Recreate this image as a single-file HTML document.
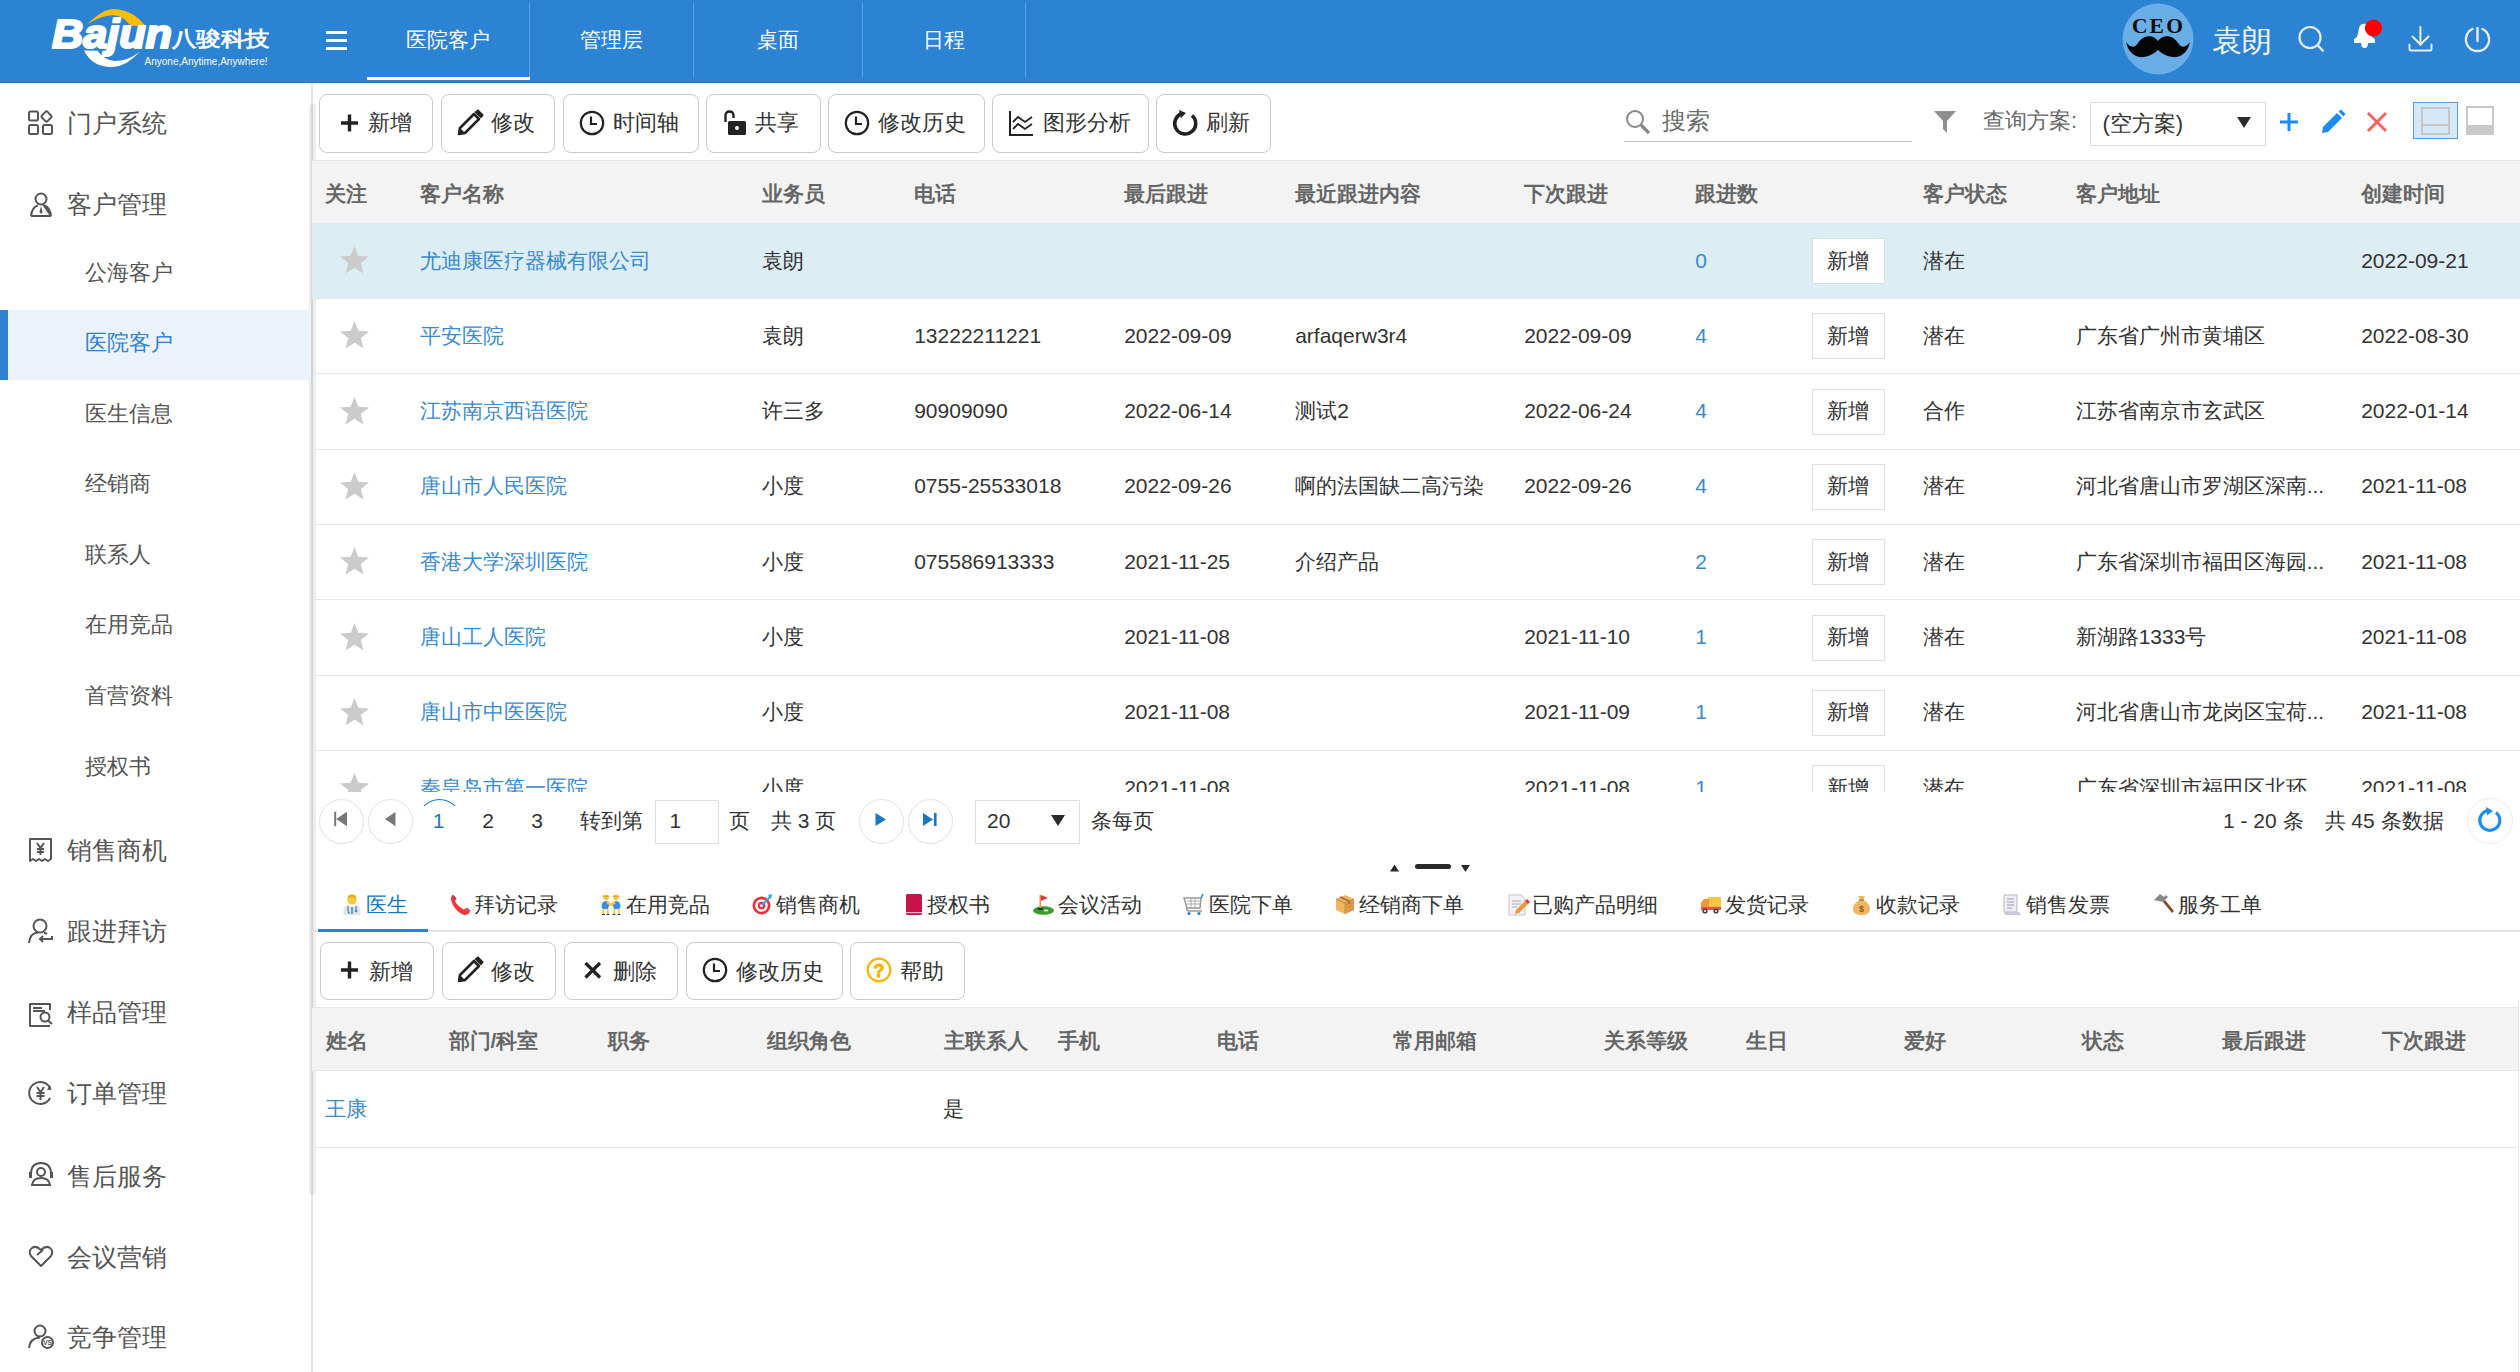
<!DOCTYPE html>
<html><head><meta charset="utf-8">
<style>
*{box-sizing:border-box;margin:0;padding:0}
html,body{width:2520px;height:1372px;overflow:hidden;background:#fff;font-family:"Liberation Sans",sans-serif;color:#333}
.t{position:absolute;white-space:nowrap;height:40px;line-height:40px}
.r{position:absolute}
svg.r{overflow:visible}
</style></head><body>

<div class="r" style="left:0px;top:0px;width:2520px;height:83px;background:#2c82d3"></div>
<div class="r" style="left:0px;top:82px;width:2520px;height:1px;background:#1c76cc"></div>
<svg class="r" style="left:0px;top:0px" width="300" height="83" viewBox="0 0 300 83">
<path d="M87.8 24 Q104 7 117 9.2 Q134 11 145 25.6 L131 26 Q122 14 111.7 15.3 Q101 16 87.8 24 Z" fill="#f7bd08"/>
<text x="52" y="48.3" font-family="Liberation Sans" font-weight="bold" font-style="italic" font-size="40" fill="#fff" stroke="#fff" stroke-width="2.2" stroke-linejoin="round" textLength="120" lengthAdjust="spacingAndGlyphs">Bajun</text>
<path d="M84 50.6 L97.5 50.8 Q104 60 114.4 61.1 Q128 61 140 51.4 Q126 67 111.7 67.2 Q92 67 84 50.6 Z" fill="#fff"/>
<text x="171.5" y="46.3" font-family="Liberation Sans" font-weight="bold" font-size="21" fill="#fff" textLength="98" lengthAdjust="spacingAndGlyphs">八骏科技</text>
<text x="144.5" y="64.5" font-family="Liberation Sans" font-size="10.5" fill="#fff" textLength="123" lengthAdjust="spacingAndGlyphs">Anyone,Anytime,Anywhere!</text>
</svg>
<div class="r" style="left:326px;top:31px;width:21px;height:2.6px;background:#fff"></div>
<div class="r" style="left:326px;top:39.2px;width:21px;height:2.6px;background:#fff"></div>
<div class="r" style="left:326px;top:47.3px;width:21px;height:2.6px;background:#fff"></div>
<div class="t" style="left:368.0px;width:160px;text-align:center;top:19.5px;font-size:21px;color:#fff;font-weight:normal">医院客户</div>
<div class="t" style="left:531.5px;width:160px;text-align:center;top:19.5px;font-size:21px;color:#fff;font-weight:normal">管理层</div>
<div class="t" style="left:697.5px;width:160px;text-align:center;top:19.5px;font-size:21px;color:#fff;font-weight:normal">桌面</div>
<div class="t" style="left:863.5px;width:160px;text-align:center;top:19.5px;font-size:21px;color:#fff;font-weight:normal">日程</div>
<div class="r" style="left:529px;top:3px;width:1px;height:74px;background:rgba(255,255,255,0.25)"></div>
<div class="r" style="left:693px;top:3px;width:1px;height:74px;background:rgba(255,255,255,0.25)"></div>
<div class="r" style="left:862px;top:3px;width:1px;height:74px;background:rgba(255,255,255,0.25)"></div>
<div class="r" style="left:1025px;top:3px;width:1px;height:74px;background:rgba(255,255,255,0.25)"></div>
<div class="r" style="left:367px;top:77px;width:163px;height:3px;background:#fff"></div>
<svg class="r" style="left:2122px;top:3px" width="72" height="72" viewBox="0 0 72 72">
<circle cx="36" cy="36" r="35.5" fill="#6aaee8"/>
<text x="36.5" y="29.5" text-anchor="middle" font-family="Liberation Serif" font-weight="bold" font-size="21.5" fill="#0a0a0a" letter-spacing="2.2">CEO</text>
<path d="M36 38 C40 32 50 31 56 40 C59 45 64 45 68 39 C66 50 58 55 50 54 C44 53 39 50 36 47 C33 50 28 53 22 54 C14 55 6 50 4 39 C8 45 13 45 16 40 C22 31 32 32 36 38 Z" fill="#050505"/>
</svg>
<div class="t" style="left:2212px;top:20.5px;font-size:30px;color:#eef4fa;font-weight:normal;">袁朗</div>
<svg class="r" style="left:0px;top:0px" width="1" height="1" viewBox="0 0 1 1">
<circle cx="2310" cy="37.5" r="10.5" fill="none" stroke="#e6eef6" stroke-width="2.2"/><line x1="2317.5" y1="45" x2="2323.5" y2="51.5" stroke="#e6eef6" stroke-width="2.4"/>
<path d="M2354 43 V38.9 Q2357 38 2358 34 L2359 28 Q2360 23.7 2364.5 23.7 Q2369 23.7 2370 28 L2371 34 Q2372 38 2375 38.9 V43 Z" fill="#fff"/>
<path d="M2361 43 H2368 Q2368 48 2364.5 48 Q2361 48 2361 43 Z" fill="#fff"/>
<circle cx="2373.5" cy="28" r="8.6" fill="#ff0000"/>
<path d="M2420.4 27 V45 M2412.5 36.5 L2420.4 44.5 L2428.5 36.5" fill="none" stroke="#e6eef6" stroke-width="2" stroke-linecap="round"/>
<path d="M2409.5 44.5 V49 Q2409.5 50.5 2411 50.5 H2430 Q2431.5 50.5 2431.5 49 V44.5" fill="none" stroke="#e6eef6" stroke-width="2" stroke-linecap="round"/>
<path d="M2472.5 29 A11.6 11.6 0 1 0 2482.5 29" fill="none" stroke="#e6eef6" stroke-width="2.4" stroke-linecap="round"/>
<line x1="2477.5" y1="28" x2="2477.5" y2="41" stroke="#e6eef6" stroke-width="2.4" stroke-linecap="round"/>
</svg>
<div class="r" style="left:311px;top:83px;width:2px;height:1289px;background:#e4e4e4"></div>
<div class="r" style="left:309px;top:104px;width:7px;height:1091px;background:rgba(0,0,0,0.07);border-radius:4px"></div>
<div class="r" style="left:0px;top:310px;width:311px;height:70px;background:#ebf2fa"></div>
<div class="r" style="left:0px;top:310px;width:8px;height:70px;background:#2c82d3"></div>
<div class="t" style="left:67px;top:103px;font-size:25px;color:#555;font-weight:normal;">门户系统</div>
<div class="t" style="left:67px;top:184px;font-size:25px;color:#555;font-weight:normal;">客户管理</div>
<div class="t" style="left:67px;top:830px;font-size:25px;color:#555;font-weight:normal;">销售商机</div>
<div class="t" style="left:67px;top:911px;font-size:25px;color:#555;font-weight:normal;">跟进拜访</div>
<div class="t" style="left:67px;top:992px;font-size:25px;color:#555;font-weight:normal;">样品管理</div>
<div class="t" style="left:67px;top:1073px;font-size:25px;color:#555;font-weight:normal;">订单管理</div>
<div class="t" style="left:67px;top:1155.5px;font-size:25px;color:#555;font-weight:normal;">售后服务</div>
<div class="t" style="left:67px;top:1236.5px;font-size:25px;color:#555;font-weight:normal;">会议营销</div>
<div class="t" style="left:67px;top:1317px;font-size:25px;color:#555;font-weight:normal;">竞争管理</div>
<div class="t" style="left:84.5px;top:252.5px;font-size:22px;color:#555;font-weight:normal;">公海客户</div>
<div class="t" style="left:84.5px;top:323px;font-size:22px;color:#2c82d3;font-weight:normal;">医院客户</div>
<div class="t" style="left:84.5px;top:393.5px;font-size:22px;color:#555;font-weight:normal;">医生信息</div>
<div class="t" style="left:84.5px;top:464px;font-size:22px;color:#555;font-weight:normal;">经销商</div>
<div class="t" style="left:84.5px;top:534.5px;font-size:22px;color:#555;font-weight:normal;">联系人</div>
<div class="t" style="left:84.5px;top:605px;font-size:22px;color:#555;font-weight:normal;">在用竞品</div>
<div class="t" style="left:84.5px;top:676px;font-size:22px;color:#555;font-weight:normal;">首营资料</div>
<div class="t" style="left:84.5px;top:746.5px;font-size:22px;color:#555;font-weight:normal;">授权书</div>
<svg class="r" style="left:28px;top:110px" width="26" height="26" viewBox="0 0 26 26"><rect x="1" y="9.5" width="9" height="9" rx="1.5" fill="none" stroke="#555" stroke-width="2" transform="translate(0,-8)"/><rect x="1" y="15" width="9" height="9" rx="1.5" fill="none" stroke="#555" stroke-width="2"/><rect x="15" y="15" width="9" height="9" rx="1.5" fill="none" stroke="#555" stroke-width="2"/><rect x="14.5" y="2.5" width="8" height="8" rx="1.5" fill="none" stroke="#555" stroke-width="2" transform="rotate(45 18.5 6.5)"/></svg>
<svg class="r" style="left:28px;top:192px" width="26" height="26" viewBox="0 0 26 26"><circle cx="13" cy="7" r="5.5" fill="none" stroke="#555" stroke-width="2"/><path d="M3 24 Q4 15 10 13.5 M16 13.5 Q22 15 23 24 Z M3 24 H23" fill="none" stroke="#555" stroke-width="2"/><path d="M13 14 L11.5 20 L13 22 L14.5 20 Z" fill="#555"/></svg>
<svg class="r" style="left:28px;top:837px" width="26" height="26" viewBox="0 0 26 26"><path d="M2 2 H23 V22 L20 24 L17 22 L14 24 L11 22 L8 24 L5 22 L2 24 Z" fill="none" stroke="#555" stroke-width="2" stroke-linejoin="round"/><path d="M9 6 L12.5 11 L16 6 M12.5 11 V18 M9 12 H16 M9 15 H16" fill="none" stroke="#555" stroke-width="2" stroke-width="1.6"/></svg>
<svg class="r" style="left:28px;top:918px" width="26" height="26" viewBox="0 0 26 26"><circle cx="12" cy="8" r="6.5" fill="none" stroke="#555" stroke-width="2"/><path d="M1 25 Q2 15 10 14.5 M16 15 Q18 15 19 16" fill="none" stroke="#555" stroke-width="2"/><path d="M24 18 V21 H12 M15 18 L12 21 L15 24" fill="none" stroke="#555" stroke-width="2"/></svg>
<svg class="r" style="left:28px;top:1002px" width="26" height="26" viewBox="0 0 26 26"><path d="M22 8 V2 H2 V24 H22" fill="none" stroke="#555" stroke-width="2" stroke-linejoin="round"/><path d="M5 6 H14 M5 9 H17" fill="none" stroke="#555" stroke-width="2"/><circle cx="17" cy="15" r="4.5" fill="none" stroke="#555" stroke-width="2"/><path d="M20 18.5 L24 22" fill="none" stroke="#555" stroke-width="2"/></svg>
<svg class="r" style="left:28px;top:1080px" width="26" height="26" viewBox="0 0 26 26"><path d="M22 8 A11 11 0 1 0 22 18" fill="none" stroke="#555" stroke-width="2"/><path d="M22 5 L23.5 10 L19 10 Z" fill="#555"/><path d="M9 7 L12.5 12 L16 7 M12.5 12 V20 M8.5 13 H16.5 M8.5 16 H16.5" fill="none" stroke="#555" stroke-width="2" stroke-width="1.6"/></svg>
<svg class="r" style="left:28px;top:1161px" width="26" height="26" viewBox="0 0 26 26"><path d="M3 13 Q3 2 13 2 Q23 2 23 13" fill="none" stroke="#555" stroke-width="2"/><rect x="1" y="11" width="3" height="6" fill="#555"/><rect x="22" y="11" width="3" height="6" fill="#555"/><circle cx="13" cy="11" r="4" fill="none" stroke="#555" stroke-width="2"/><path d="M4 24 Q5 17 13 17 Q21 17 22 24 Z" fill="none" stroke="#555" stroke-width="2"/></svg>
<svg class="r" style="left:28px;top:1245px" width="26" height="26" viewBox="0 0 26 26"><path d="M13 21 L3 11 Q0 6 4 3 Q8 0 13 5 Q18 0 22 3 Q26 6 23 11 Z" fill="none" stroke="#555" stroke-width="2" stroke-linejoin="round"/><path d="M9 10 L15 5" fill="none" stroke="#555" stroke-width="2"/></svg>
<svg class="r" style="left:28px;top:1324px" width="26" height="26" viewBox="0 0 26 26"><circle cx="12" cy="7" r="5.5" fill="none" stroke="#555" stroke-width="2"/><path d="M1 24 Q2 14 12 13.5" fill="none" stroke="#555" stroke-width="2"/><circle cx="19.5" cy="18.5" r="5.5" fill="none" stroke="#555" stroke-width="2"/><text x="19.5" y="21" text-anchor="middle" font-size="6.5" font-weight="bold" fill="#555" font-family="Liberation Sans">VS</text></svg>
<div class="r" style="left:319px;top:94px;width:114px;height:59px;border:1px solid #c9c9c9;border-radius:8px;background:#fff"></div>
<svg class="r" style="left:337px;top:109.5px" width="26" height="26" viewBox="0 0 26 26"><path d="M4 13 H21 M12.5 4.5 V21.5" stroke="#222" stroke-width="3.4"/></svg>
<div class="t" style="left:368px;top:102.7px;font-size:22px;color:#333;font-weight:normal;">新增</div>
<div class="r" style="left:441px;top:94px;width:114px;height:59px;border:1px solid #c9c9c9;border-radius:8px;background:#fff"></div>
<svg class="r" style="left:457px;top:109.5px" width="26" height="26" viewBox="0 0 26 26"><path d="M2 24 L3 18 L17 4 L22 9 L8 23 Z" fill="none" stroke="#222" stroke-width="2.6" stroke-linejoin="round"/><path d="M19 2 L21 0.5 L25.5 5 L24 7 Z" fill="#222" stroke="#222" stroke-width="2"/><path d="M2 24 L3 18 L8 23 Z" fill="#222"/></svg>
<div class="t" style="left:490.5px;top:102.7px;font-size:22px;color:#333;font-weight:normal;">修改</div>
<div class="r" style="left:563px;top:94px;width:136px;height:59px;border:1px solid #c9c9c9;border-radius:8px;background:#fff"></div>
<svg class="r" style="left:579px;top:109.5px" width="26" height="26" viewBox="0 0 26 26"><circle cx="13" cy="13" r="11.2" fill="none" stroke="#222" stroke-width="2.2"/><path d="M12 6.5 V14 H18" fill="none" stroke="#222" stroke-width="2.2"/></svg>
<div class="t" style="left:612.5px;top:102.7px;font-size:22px;color:#333;font-weight:normal;">时间轴</div>
<div class="r" style="left:706px;top:94px;width:115px;height:59px;border:1px solid #c9c9c9;border-radius:8px;background:#fff"></div>
<svg class="r" style="left:722px;top:109.5px" width="26" height="26" viewBox="0 0 26 26"><path d="M3.5 12 V5.5 Q3.5 1.5 7.5 1.5 Q11.5 1.5 11.5 5.5 V8" fill="none" stroke="#222" stroke-width="2.4"/><rect x="6" y="11" width="18" height="14" rx="1.5" fill="#222"/><circle cx="15" cy="18" r="2" fill="#fff"/></svg>
<div class="t" style="left:755px;top:102.7px;font-size:22px;color:#333;font-weight:normal;">共享</div>
<div class="r" style="left:828px;top:94px;width:157px;height:59px;border:1px solid #c9c9c9;border-radius:8px;background:#fff"></div>
<svg class="r" style="left:844px;top:109.5px" width="26" height="26" viewBox="0 0 26 26"><circle cx="13" cy="13" r="11.2" fill="none" stroke="#222" stroke-width="2.2"/><path d="M12 6.5 V14 H18" fill="none" stroke="#222" stroke-width="2.2"/></svg>
<div class="t" style="left:877.5px;top:102.7px;font-size:22px;color:#333;font-weight:normal;">修改历史</div>
<div class="r" style="left:992px;top:94px;width:157px;height:59px;border:1px solid #c9c9c9;border-radius:8px;background:#fff"></div>
<svg class="r" style="left:1008px;top:109.5px" width="26" height="26" viewBox="0 0 26 26"><path d="M2 1 V25 H25" fill="none" stroke="#222" stroke-width="2"/><path d="M5 12 L10 7 L17 12 L24 7 M5 19 L10 14 L17 19 L24 14" fill="none" stroke="#222" stroke-width="1.8"/></svg>
<div class="t" style="left:1042.5px;top:102.7px;font-size:22px;color:#333;font-weight:normal;">图形分析</div>
<div class="r" style="left:1156px;top:94px;width:115px;height:59px;border:1px solid #c9c9c9;border-radius:8px;background:#fff"></div>
<svg class="r" style="left:1172px;top:109.5px" width="26" height="26" viewBox="0 0 26 26"><path d="M10 3.5 A10.5 10.5 0 1 0 20 5.5" fill="none" stroke="#222" stroke-width="3.6"/><path d="M7 0 L14 3 L9 8 Z" fill="#222"/></svg>
<div class="t" style="left:1206px;top:102.7px;font-size:22px;color:#333;font-weight:normal;">刷新</div>
<svg class="r" style="left:1624px;top:108px" width="28" height="28" viewBox="0 0 28 28"><circle cx="11" cy="11" r="8" fill="none" stroke="#888" stroke-width="2"/><path d="M17 17 L25 25" stroke="#888" stroke-width="3.2"/></svg>
<div class="t" style="left:1661.5px;top:101px;font-size:24px;color:#6b6b6b;font-weight:normal;">搜索</div>
<div class="r" style="left:1624px;top:140.7px;width:288px;height:1.2px;background:#c4c4c4"></div>
<svg class="r" style="left:1933px;top:110px" width="24" height="24" viewBox="0 0 24 24"><path d="M1 1 H23 L14 11 V23 L10 19 V11 Z" fill="#8e8e8e"/></svg>
<div class="t" style="left:1983px;top:101px;font-size:22px;color:#666;font-weight:normal;">查询方案:</div>
<div class="r" style="left:2090px;top:102px;width:176px;height:44px;border:1px solid #dcdcdc;background:#fff"></div>
<div class="t" style="left:2102.5px;top:104px;font-size:22px;color:#333;font-weight:normal;">(空方案)</div>
<svg class="r" style="left:2237px;top:117px" width="14" height="11" viewBox="0 0 14 11"><path d="M0 0 H14 L7 11 Z" fill="#2b2b2b"/></svg>
<svg class="r" style="left:2278px;top:112px" width="22" height="20" viewBox="0 0 22 20"><path d="M2 10 H20 M11 1 V19" stroke="#1a8cf2" stroke-width="3"/></svg>
<svg class="r" style="left:2320px;top:109px" width="26" height="26" viewBox="0 0 26 26"><path d="M2 24 L3 18 L17 4 L22 9 L8 23 Z" fill="#1a8cf2"/><path d="M18.5 2.5 L21 0.5 L25.5 5 L23.5 7.5 Z" fill="#1a8cf2"/><path d="M4.5 21.5 L17 9" stroke="#fff" stroke-width="0"/></svg>
<svg class="r" style="left:2366px;top:112px" width="22" height="20" viewBox="0 0 22 20"><path d="M2 1 L20 19 M20 1 L2 19" stroke="#f46262" stroke-width="3"/></svg>
<div class="r" style="left:2413px;top:102px;width:45px;height:37px;background:#d5e8f7;border:1px solid #5a9ad8"></div>
<div class="r" style="left:2421px;top:106.5px;width:29px;height:28px;border:2px solid #c6c6c6"></div>
<div class="r" style="left:2421px;top:123.5px;width:29px;height:2px;background:#c6c6c6"></div>
<div class="r" style="left:2466px;top:106px;width:28px;height:29px;border:2px solid #c9c9c9;background:#fff"></div>
<div class="r" style="left:2466px;top:124.5px;width:28px;height:10.5px;background:#c9c9c9"></div>
<div class="r" style="left:312px;top:160px;width:2208px;height:1px;background:#e6e6e6"></div>
<div class="r" style="left:312px;top:161px;width:2208px;height:62px;background:#f3f3f3"></div>
<div class="t" style="left:325.2px;top:173.5px;font-size:21px;color:#666;font-weight:bold;">关注</div>
<div class="t" style="left:420.2px;top:173.5px;font-size:21px;color:#666;font-weight:bold;">客户名称</div>
<div class="t" style="left:762.2px;top:173.5px;font-size:21px;color:#666;font-weight:bold;">业务员</div>
<div class="t" style="left:914.2px;top:173.5px;font-size:21px;color:#666;font-weight:bold;">电话</div>
<div class="t" style="left:1124.2px;top:173.5px;font-size:21px;color:#666;font-weight:bold;">最后跟进</div>
<div class="t" style="left:1295.2px;top:173.5px;font-size:21px;color:#666;font-weight:bold;">最近跟进内容</div>
<div class="t" style="left:1524.2px;top:173.5px;font-size:21px;color:#666;font-weight:bold;">下次跟进</div>
<div class="t" style="left:1695.2px;top:173.5px;font-size:21px;color:#666;font-weight:bold;">跟进数</div>
<div class="t" style="left:1923.2px;top:173.5px;font-size:21px;color:#666;font-weight:bold;">客户状态</div>
<div class="t" style="left:2075.7px;top:173.5px;font-size:21px;color:#666;font-weight:bold;">客户地址</div>
<div class="t" style="left:2361.2px;top:173.5px;font-size:21px;color:#666;font-weight:bold;">创建时间</div>
<div class="r" style="left:312px;top:223px;width:2208px;height:569px;overflow:hidden">
<div class="r" style="left:0;top:0;width:2208px;height:75px;background:#dcedf3"></div>
<div class="r" style="left:0;top:75.00px;width:2208px;height:1px;background:#e6e6e6"></div>
<svg class="r" style="left:27.5px;top:23.00px" width="30" height="30" viewBox="0 0 30 30"><path d="M14.5 0 L18.3 9.7 L29 10.4 L20.8 17.1 L23.5 27.6 L14.5 21.8 L5.5 27.6 L8.2 17.1 L0 10.4 L10.7 9.7 Z" fill="#cbcbcb"/></svg>
<div class="t" style="left:108.2px;top:17.50px;font-size:21px;color:#3a8ad0">尤迪康医疗器械有限公司</div>
<div class="t" style="left:450.2px;top:17.50px;font-size:21px;color:#333">袁朗</div>
<div class="t" style="left:602.2px;top:17.50px;font-size:21px;color:#333"></div>
<div class="t" style="left:812.2px;top:17.50px;font-size:21px;color:#333"></div>
<div class="t" style="left:983.2px;top:17.50px;font-size:21px;color:#333"></div>
<div class="t" style="left:1212.2px;top:17.50px;font-size:21px;color:#333"></div>
<div class="t" style="left:1383.2px;top:17.50px;font-size:21px;color:#3a8ad0">0</div>
<div class="r" style="left:1500px;top:15.00px;width:73px;height:46px;border:1px solid #dedede;background:#fff"></div>
<div class="t" style="left:1515.2px;top:17.50px;font-size:21px;color:#333">新增</div>
<div class="t" style="left:1611.2px;top:17.50px;font-size:21px;color:#333">潜在</div>
<div class="t" style="left:1763.7px;top:17.50px;font-size:21px;color:#333"></div>
<div class="t" style="left:2049.2px;top:17.50px;font-size:21px;color:#333">2022-09-21</div>
<div class="r" style="left:0;top:150.33px;width:2208px;height:1px;background:#e6e6e6"></div>
<svg class="r" style="left:27.5px;top:98.33px" width="30" height="30" viewBox="0 0 30 30"><path d="M14.5 0 L18.3 9.7 L29 10.4 L20.8 17.1 L23.5 27.6 L14.5 21.8 L5.5 27.6 L8.2 17.1 L0 10.4 L10.7 9.7 Z" fill="#cbcbcb"/></svg>
<div class="t" style="left:108.2px;top:92.83px;font-size:21px;color:#3a8ad0">平安医院</div>
<div class="t" style="left:450.2px;top:92.83px;font-size:21px;color:#333">袁朗</div>
<div class="t" style="left:602.2px;top:92.83px;font-size:21px;color:#333">13222211221</div>
<div class="t" style="left:812.2px;top:92.83px;font-size:21px;color:#333">2022-09-09</div>
<div class="t" style="left:983.2px;top:92.83px;font-size:21px;color:#333">arfaqerw3r4</div>
<div class="t" style="left:1212.2px;top:92.83px;font-size:21px;color:#333">2022-09-09</div>
<div class="t" style="left:1383.2px;top:92.83px;font-size:21px;color:#3a8ad0">4</div>
<div class="r" style="left:1500px;top:90.33px;width:73px;height:46px;border:1px solid #dedede;background:#fff"></div>
<div class="t" style="left:1515.2px;top:92.83px;font-size:21px;color:#333">新增</div>
<div class="t" style="left:1611.2px;top:92.83px;font-size:21px;color:#333">潜在</div>
<div class="t" style="left:1763.7px;top:92.83px;font-size:21px;color:#333">广东省广州市黄埔区</div>
<div class="t" style="left:2049.2px;top:92.83px;font-size:21px;color:#333">2022-08-30</div>
<div class="r" style="left:0;top:225.66px;width:2208px;height:1px;background:#e6e6e6"></div>
<svg class="r" style="left:27.5px;top:173.66px" width="30" height="30" viewBox="0 0 30 30"><path d="M14.5 0 L18.3 9.7 L29 10.4 L20.8 17.1 L23.5 27.6 L14.5 21.8 L5.5 27.6 L8.2 17.1 L0 10.4 L10.7 9.7 Z" fill="#cbcbcb"/></svg>
<div class="t" style="left:108.2px;top:168.16px;font-size:21px;color:#3a8ad0">江苏南京西语医院</div>
<div class="t" style="left:450.2px;top:168.16px;font-size:21px;color:#333">许三多</div>
<div class="t" style="left:602.2px;top:168.16px;font-size:21px;color:#333">90909090</div>
<div class="t" style="left:812.2px;top:168.16px;font-size:21px;color:#333">2022-06-14</div>
<div class="t" style="left:983.2px;top:168.16px;font-size:21px;color:#333">测试2</div>
<div class="t" style="left:1212.2px;top:168.16px;font-size:21px;color:#333">2022-06-24</div>
<div class="t" style="left:1383.2px;top:168.16px;font-size:21px;color:#3a8ad0">4</div>
<div class="r" style="left:1500px;top:165.66px;width:73px;height:46px;border:1px solid #dedede;background:#fff"></div>
<div class="t" style="left:1515.2px;top:168.16px;font-size:21px;color:#333">新增</div>
<div class="t" style="left:1611.2px;top:168.16px;font-size:21px;color:#333">合作</div>
<div class="t" style="left:1763.7px;top:168.16px;font-size:21px;color:#333">江苏省南京市玄武区</div>
<div class="t" style="left:2049.2px;top:168.16px;font-size:21px;color:#333">2022-01-14</div>
<div class="r" style="left:0;top:300.99px;width:2208px;height:1px;background:#e6e6e6"></div>
<svg class="r" style="left:27.5px;top:248.99px" width="30" height="30" viewBox="0 0 30 30"><path d="M14.5 0 L18.3 9.7 L29 10.4 L20.8 17.1 L23.5 27.6 L14.5 21.8 L5.5 27.6 L8.2 17.1 L0 10.4 L10.7 9.7 Z" fill="#cbcbcb"/></svg>
<div class="t" style="left:108.2px;top:243.49px;font-size:21px;color:#3a8ad0">唐山市人民医院</div>
<div class="t" style="left:450.2px;top:243.49px;font-size:21px;color:#333">小度</div>
<div class="t" style="left:602.2px;top:243.49px;font-size:21px;color:#333">0755-25533018</div>
<div class="t" style="left:812.2px;top:243.49px;font-size:21px;color:#333">2022-09-26</div>
<div class="t" style="left:983.2px;top:243.49px;font-size:21px;color:#333">啊的法国缺二高污染</div>
<div class="t" style="left:1212.2px;top:243.49px;font-size:21px;color:#333">2022-09-26</div>
<div class="t" style="left:1383.2px;top:243.49px;font-size:21px;color:#3a8ad0">4</div>
<div class="r" style="left:1500px;top:240.99px;width:73px;height:46px;border:1px solid #dedede;background:#fff"></div>
<div class="t" style="left:1515.2px;top:243.49px;font-size:21px;color:#333">新增</div>
<div class="t" style="left:1611.2px;top:243.49px;font-size:21px;color:#333">潜在</div>
<div class="t" style="left:1763.7px;top:243.49px;font-size:21px;color:#333">河北省唐山市罗湖区深南...</div>
<div class="t" style="left:2049.2px;top:243.49px;font-size:21px;color:#333">2021-11-08</div>
<div class="r" style="left:0;top:376.32px;width:2208px;height:1px;background:#e6e6e6"></div>
<svg class="r" style="left:27.5px;top:324.32px" width="30" height="30" viewBox="0 0 30 30"><path d="M14.5 0 L18.3 9.7 L29 10.4 L20.8 17.1 L23.5 27.6 L14.5 21.8 L5.5 27.6 L8.2 17.1 L0 10.4 L10.7 9.7 Z" fill="#cbcbcb"/></svg>
<div class="t" style="left:108.2px;top:318.82px;font-size:21px;color:#3a8ad0">香港大学深圳医院</div>
<div class="t" style="left:450.2px;top:318.82px;font-size:21px;color:#333">小度</div>
<div class="t" style="left:602.2px;top:318.82px;font-size:21px;color:#333">075586913333</div>
<div class="t" style="left:812.2px;top:318.82px;font-size:21px;color:#333">2021-11-25</div>
<div class="t" style="left:983.2px;top:318.82px;font-size:21px;color:#333">介绍产品</div>
<div class="t" style="left:1212.2px;top:318.82px;font-size:21px;color:#333"></div>
<div class="t" style="left:1383.2px;top:318.82px;font-size:21px;color:#3a8ad0">2</div>
<div class="r" style="left:1500px;top:316.32px;width:73px;height:46px;border:1px solid #dedede;background:#fff"></div>
<div class="t" style="left:1515.2px;top:318.82px;font-size:21px;color:#333">新增</div>
<div class="t" style="left:1611.2px;top:318.82px;font-size:21px;color:#333">潜在</div>
<div class="t" style="left:1763.7px;top:318.82px;font-size:21px;color:#333">广东省深圳市福田区海园...</div>
<div class="t" style="left:2049.2px;top:318.82px;font-size:21px;color:#333">2021-11-08</div>
<div class="r" style="left:0;top:451.65px;width:2208px;height:1px;background:#e6e6e6"></div>
<svg class="r" style="left:27.5px;top:399.65px" width="30" height="30" viewBox="0 0 30 30"><path d="M14.5 0 L18.3 9.7 L29 10.4 L20.8 17.1 L23.5 27.6 L14.5 21.8 L5.5 27.6 L8.2 17.1 L0 10.4 L10.7 9.7 Z" fill="#cbcbcb"/></svg>
<div class="t" style="left:108.2px;top:394.15px;font-size:21px;color:#3a8ad0">唐山工人医院</div>
<div class="t" style="left:450.2px;top:394.15px;font-size:21px;color:#333">小度</div>
<div class="t" style="left:602.2px;top:394.15px;font-size:21px;color:#333"></div>
<div class="t" style="left:812.2px;top:394.15px;font-size:21px;color:#333">2021-11-08</div>
<div class="t" style="left:983.2px;top:394.15px;font-size:21px;color:#333"></div>
<div class="t" style="left:1212.2px;top:394.15px;font-size:21px;color:#333">2021-11-10</div>
<div class="t" style="left:1383.2px;top:394.15px;font-size:21px;color:#3a8ad0">1</div>
<div class="r" style="left:1500px;top:391.65px;width:73px;height:46px;border:1px solid #dedede;background:#fff"></div>
<div class="t" style="left:1515.2px;top:394.15px;font-size:21px;color:#333">新增</div>
<div class="t" style="left:1611.2px;top:394.15px;font-size:21px;color:#333">潜在</div>
<div class="t" style="left:1763.7px;top:394.15px;font-size:21px;color:#333">新湖路1333号</div>
<div class="t" style="left:2049.2px;top:394.15px;font-size:21px;color:#333">2021-11-08</div>
<div class="r" style="left:0;top:526.98px;width:2208px;height:1px;background:#e6e6e6"></div>
<svg class="r" style="left:27.5px;top:474.98px" width="30" height="30" viewBox="0 0 30 30"><path d="M14.5 0 L18.3 9.7 L29 10.4 L20.8 17.1 L23.5 27.6 L14.5 21.8 L5.5 27.6 L8.2 17.1 L0 10.4 L10.7 9.7 Z" fill="#cbcbcb"/></svg>
<div class="t" style="left:108.2px;top:469.48px;font-size:21px;color:#3a8ad0">唐山市中医医院</div>
<div class="t" style="left:450.2px;top:469.48px;font-size:21px;color:#333">小度</div>
<div class="t" style="left:602.2px;top:469.48px;font-size:21px;color:#333"></div>
<div class="t" style="left:812.2px;top:469.48px;font-size:21px;color:#333">2021-11-08</div>
<div class="t" style="left:983.2px;top:469.48px;font-size:21px;color:#333"></div>
<div class="t" style="left:1212.2px;top:469.48px;font-size:21px;color:#333">2021-11-09</div>
<div class="t" style="left:1383.2px;top:469.48px;font-size:21px;color:#3a8ad0">1</div>
<div class="r" style="left:1500px;top:466.98px;width:73px;height:46px;border:1px solid #dedede;background:#fff"></div>
<div class="t" style="left:1515.2px;top:469.48px;font-size:21px;color:#333">新增</div>
<div class="t" style="left:1611.2px;top:469.48px;font-size:21px;color:#333">潜在</div>
<div class="t" style="left:1763.7px;top:469.48px;font-size:21px;color:#333">河北省唐山市龙岗区宝荷...</div>
<div class="t" style="left:2049.2px;top:469.48px;font-size:21px;color:#333">2021-11-08</div>
<div class="r" style="left:0;top:602.31px;width:2208px;height:1px;background:#e6e6e6"></div>
<svg class="r" style="left:27.5px;top:550.31px" width="30" height="30" viewBox="0 0 30 30"><path d="M14.5 0 L18.3 9.7 L29 10.4 L20.8 17.1 L23.5 27.6 L14.5 21.8 L5.5 27.6 L8.2 17.1 L0 10.4 L10.7 9.7 Z" fill="#cbcbcb"/></svg>
<div class="t" style="left:108.2px;top:544.81px;font-size:21px;color:#3a8ad0">秦皇岛市第一医院</div>
<div class="t" style="left:450.2px;top:544.81px;font-size:21px;color:#333">小度</div>
<div class="t" style="left:602.2px;top:544.81px;font-size:21px;color:#333"></div>
<div class="t" style="left:812.2px;top:544.81px;font-size:21px;color:#333">2021-11-08</div>
<div class="t" style="left:983.2px;top:544.81px;font-size:21px;color:#333"></div>
<div class="t" style="left:1212.2px;top:544.81px;font-size:21px;color:#333">2021-11-08</div>
<div class="t" style="left:1383.2px;top:544.81px;font-size:21px;color:#3a8ad0">1</div>
<div class="r" style="left:1500px;top:542.31px;width:73px;height:46px;border:1px solid #dedede;background:#fff"></div>
<div class="t" style="left:1515.2px;top:544.81px;font-size:21px;color:#333">新增</div>
<div class="t" style="left:1611.2px;top:544.81px;font-size:21px;color:#333">潜在</div>
<div class="t" style="left:1763.7px;top:544.81px;font-size:21px;color:#333">广东省深圳市福田区北环...</div>
<div class="t" style="left:2049.2px;top:544.81px;font-size:21px;color:#333">2021-11-08</div>
</div>
<div class="r" style="left:319.0px;top:798.5px;width:45px;height:45px;border:1px solid #e2e2e2;border-radius:50%"></div>
<div class="r" style="left:368.0px;top:798.5px;width:45px;height:45px;border:1px solid #e2e2e2;border-radius:50%"></div>
<svg class="r" style="left:333px;top:811px" width="16" height="16" viewBox="0 0 16 16"><rect x="1.2" y="0.7" width="2" height="14.5" fill="#777"/><path d="M14 0.7 V15.2 L3.2 7.95 Z" fill="#777"/></svg>
<svg class="r" style="left:384px;top:811px" width="14" height="16" viewBox="0 0 14 16"><path d="M11.5 1 V15.2 L1 8.1 Z" fill="#777"/></svg>
<div class="r" style="left:416.5px;top:798.5px;width:45px;height:45px;border:1.3px solid transparent;border-top-color:#1a7cc8;border-radius:50%"></div>
<div class="t" style="left:423.5px;width:30px;text-align:center;top:801px;font-size:21px;color:#1b7ac6;font-weight:normal">1</div>
<div class="t" style="left:473.0px;width:30px;text-align:center;top:801px;font-size:21px;color:#333;font-weight:normal">2</div>
<div class="t" style="left:522.0px;width:30px;text-align:center;top:801px;font-size:21px;color:#333;font-weight:normal">3</div>
<div class="t" style="left:580px;top:801px;font-size:21px;color:#333;font-weight:normal;">转到第</div>
<div class="r" style="left:655px;top:799.5px;width:64px;height:44px;border:1px solid #dedede"></div>
<div class="t" style="left:669.5px;top:801px;font-size:21px;color:#333;font-weight:normal;">1</div>
<div class="t" style="left:729px;top:801px;font-size:21px;color:#333;font-weight:normal;">页</div>
<div class="t" style="left:771px;top:801px;font-size:21px;color:#333;font-weight:normal;">共 3 页</div>
<div class="r" style="left:858.5px;top:798.5px;width:45px;height:45px;border:1px solid #e2e2e2;border-radius:50%"></div>
<div class="r" style="left:907.5px;top:798.5px;width:45px;height:45px;border:1px solid #e2e2e2;border-radius:50%"></div>
<svg class="r" style="left:875px;top:813px" width="12" height="14" viewBox="0 0 12 14"><path d="M0.5 0 V13 L11 6.5 Z" fill="#1878c4"/></svg>
<svg class="r" style="left:922px;top:812px" width="16" height="16" viewBox="0 0 16 16"><path d="M1 1 V14 L11 7.5 Z" fill="#1878c4"/><rect x="12" y="1" width="2.6" height="13" fill="#1878c4"/></svg>
<div class="r" style="left:974.5px;top:799.5px;width:105px;height:44px;border:1px solid #dedede"></div>
<div class="t" style="left:987px;top:801px;font-size:21px;color:#333;font-weight:normal;">20</div>
<svg class="r" style="left:1051px;top:815px" width="14" height="11" viewBox="0 0 14 11"><path d="M0 0 H14 L7 11 Z" fill="#2b2b2b"/></svg>
<div class="t" style="left:1090.5px;top:801px;font-size:21px;color:#333;font-weight:normal;">条每页</div>
<div class="t" style="left:2223px;top:801px;font-size:21px;color:#333;font-weight:normal;">1 - 20 条</div>
<div class="t" style="left:2324.5px;top:801px;font-size:21px;color:#333;font-weight:normal;">共 45 条数据</div>
<div class="r" style="left:2466.5px;top:798.0px;width:46px;height:46px;border:1px solid #ececec;border-radius:50%"></div>
<svg class="r" style="left:2476px;top:807px" width="28" height="28" viewBox="0 0 28 28"><path d="M20 5.5 A10 10 0 1 1 12 3.5" fill="none" stroke="#1b8ef0" stroke-width="3.2"/><path d="M10 0 L17 4 L11 8.5 Z" fill="#1b8ef0"/></svg>
<svg class="r" style="left:1390px;top:864px" width="10" height="8" viewBox="0 0 10 8"><path d="M4.5 0.5 L9 7.5 H0 Z" fill="#2a2a2a"/></svg>
<div class="r" style="left:1415px;top:864px;width:36px;height:5px;background:#2a2a2a;border-radius:2.5px"></div>
<svg class="r" style="left:1460.5px;top:865px" width="9" height="7" viewBox="0 0 9 7"><path d="M0 0 H9 L4.5 7 Z" fill="#2a2a2a"/></svg>
<div class="r" style="left:312px;top:930px;width:2208px;height:1.5px;background:#e4e4e4"></div>
<div class="r" style="left:318px;top:928.5px;width:110px;height:3px;background:#2c82d3"></div>
<svg class="r" style="left:343px;top:893.5px" width="22" height="22" viewBox="0 0 22 22"><path d="M0.5 21 V16 Q1 11.5 6 11 H12 Q17 11.5 17.5 16 V21 Z" fill="#e4e4e4"/><path d="M6 11 L9 14 L12 11" fill="#fff"/><path d="M5 12 V17 Q5 19 7 19 M13 12 V16" fill="none" stroke="#3a86d0" stroke-width="1.2"/><circle cx="13" cy="17" r="1.3" fill="#3a86d0"/><rect x="8" y="13" width="2" height="7" fill="#5aa0e0"/><circle cx="9" cy="6" r="4.6" fill="#ffc83d"/><path d="M4.4 5 Q4.5 0.5 9 0.5 Q13.5 0.5 13.6 5 Q12 3 9 3 Q6 3 4.4 5 Z" fill="#e0a818"/></svg>
<div class="t" style="left:366px;top:885.2px;font-size:21px;color:#1479c6;font-weight:normal;">医生</div>
<svg class="r" style="left:450px;top:893.5px" width="22" height="22" viewBox="0 0 22 22"><path d="M3 0.8 L6.5 4.5 L5 7 Q7 11.5 13.5 15.5 L16 14.3 L19.8 18 Q18 21.5 14 21 Q4 17 1 6 Q0.5 2.5 3 0.8 Z" fill="#f2383a"/><path d="M3 0.8 L6.5 4.5 L5.6 5.6 L2.2 1.8 Z" fill="#9a3d8e"/><path d="M19.8 18 L16 14.3 L17.2 13.5 L20.7 17 Z" fill="#9a3d8e"/></svg>
<div class="t" style="left:474px;top:885.2px;font-size:21px;color:#333;font-weight:normal;">拜访记录</div>
<svg class="r" style="left:601px;top:893.5px" width="22" height="22" viewBox="0 0 22 22"><circle cx="5" cy="3.5" r="2.8" fill="#ffc83d"/><circle cx="15" cy="3.5" r="2.8" fill="#ffc83d"/><path d="M2 1.5 H8 V3 H2 Z M12 1.5 H18 V3 H12 Z" fill="#e0a818"/><path d="M0.5 13 Q0.5 7 5 7 Q8 7 8.5 10 L7 15 H2 Z" fill="#3a8ee0"/><path d="M19.5 13 Q19.5 7 15 7 Q12 7 11.5 10 L13 15 H18 Z" fill="#3a8ee0"/><path d="M6 8 L10 11 L14 8" fill="none" stroke="#ffc83d" stroke-width="2.2"/><path d="M2.5 15 L2 20 M6.5 15 L7 20 M13.5 15 L13 20 M17.5 15 L18 20" stroke="#ffc83d" stroke-width="2"/><path d="M1 20.5 H4 M5.5 20.5 H8.5 M11.5 20.5 H14.5 M16.5 20.5 H19.5" stroke="#3a3a80" stroke-width="1.2"/></svg>
<div class="t" style="left:625.5px;top:885.2px;font-size:21px;color:#333;font-weight:normal;">在用竞品</div>
<svg class="r" style="left:752px;top:893.5px" width="22" height="22" viewBox="0 0 22 22"><circle cx="9.5" cy="11.5" r="9" fill="#e8313f"/><circle cx="9.5" cy="11.5" r="6.3" fill="#fff"/><circle cx="9.5" cy="11.5" r="3.8" fill="#e8313f"/><circle cx="9.5" cy="11.5" r="1.6" fill="#fff"/><path d="M10 11 L19 2" stroke="#3aa0e0" stroke-width="2"/><path d="M16 1 L20 0 L19 5 Z" fill="#3aa0e0"/></svg>
<div class="t" style="left:776px;top:885.2px;font-size:21px;color:#333;font-weight:normal;">销售商机</div>
<svg class="r" style="left:905px;top:893.5px" width="22" height="22" viewBox="0 0 22 22"><rect x="1" y="0" width="16" height="21" rx="1.5" fill="#c8134a"/><rect x="1" y="18" width="16" height="1.2" fill="#f3b0c0"/></svg>
<div class="t" style="left:927px;top:885.2px;font-size:21px;color:#333;font-weight:normal;">授权书</div>
<svg class="r" style="left:1033px;top:893.5px" width="22" height="22" viewBox="0 0 22 22"><ellipse cx="10.5" cy="16.5" rx="10.5" ry="4.3" fill="#3c9a2e"/><ellipse cx="13" cy="16.5" rx="2.5" ry="1" fill="#e0f0d0"/><rect x="6.5" y="1" width="1.5" height="15" fill="#d89a40"/><path d="M8 1 L15 4 L8 7 Z" fill="#e8313f"/><rect x="5" y="14" width="5" height="2" fill="#333"/></svg>
<div class="t" style="left:1057.5px;top:885.2px;font-size:21px;color:#333;font-weight:normal;">会议活动</div>
<svg class="r" style="left:1183px;top:893.5px" width="22" height="22" viewBox="0 0 22 22"><path d="M1 4 H18 L17 14 H4 Z" fill="none" stroke="#999" stroke-width="1.5"/><path d="M4 7 H17 M4 10 H17 M8 4 V14 M12 4 V14" stroke="#aaa" stroke-width="1"/><path d="M4 14 Q3 17 6 17 H19" fill="none" stroke="#999" stroke-width="1.5"/><circle cx="6" cy="19.5" r="1.6" fill="#2a80d0"/><circle cx="16" cy="19.5" r="1.6" fill="#2a80d0"/><path d="M18 4 L20 0" stroke="#2a80d0" stroke-width="1.5"/></svg>
<div class="t" style="left:1209px;top:885.2px;font-size:21px;color:#333;font-weight:normal;">医院下单</div>
<svg class="r" style="left:1335px;top:893.5px" width="22" height="22" viewBox="0 0 22 22"><path d="M10 1 L19 5 V16 L10 20 L1 16 V5 Z" fill="#f0b660"/><path d="M1 5 L10 9 L19 5 M10 9 V20" fill="none" stroke="#c8843a" stroke-width="1"/><path d="M10 9 L10 20 L19 16 V5 Z" fill="#d8974a"/><path d="M5 3 L14 7 V10" stroke="#a86a30" stroke-width="1.6" fill="none"/></svg>
<div class="t" style="left:1359px;top:885.2px;font-size:21px;color:#333;font-weight:normal;">经销商下单</div>
<svg class="r" style="left:1508px;top:893.5px" width="22" height="22" viewBox="0 0 22 22"><path d="M1 1 H13 L17 5 V21 H1 Z" fill="#f5f0f5" stroke="#c8c0d0" stroke-width="1"/><path d="M4 7 H13 M4 10 H13 M4 13 H9" stroke="#b0a8c0" stroke-width="1"/><path d="M7 20 L8 16 L17 7 L20 10 L11 19 Z" fill="#f0963a"/><path d="M17 7 L19 5 L22 8 L20 10 Z" fill="#e8313f"/></svg>
<div class="t" style="left:1532px;top:885.2px;font-size:21px;color:#333;font-weight:normal;">已购产品明细</div>
<svg class="r" style="left:1699.5px;top:893.5px" width="22" height="22" viewBox="0 0 22 22"><rect x="8" y="3" width="13" height="11" rx="1" fill="#f7c542"/><path d="M1 9 L4 5 H9 V16 H1 Z" fill="#f0963a"/><rect x="1" y="13" width="20" height="3" fill="#e8534a"/><circle cx="5" cy="17" r="2.6" fill="#444"/><circle cx="16" cy="17" r="2.6" fill="#444"/><circle cx="5" cy="17" r="1" fill="#fff"/><circle cx="16" cy="17" r="1" fill="#fff"/></svg>
<div class="t" style="left:1724.5px;top:885.2px;font-size:21px;color:#333;font-weight:normal;">发货记录</div>
<svg class="r" style="left:1852px;top:893.5px" width="22" height="22" viewBox="0 0 22 22"><path d="M6 2 H13 L11 6 Q18 9 18 15 Q18 21 9.5 21 Q1 21 1 15 Q1 9 8 6 Z" fill="#f0b660"/><path d="M7 6 H12" stroke="#b87a30" stroke-width="1.5"/><text x="9.5" y="18" text-anchor="middle" font-size="9" font-weight="bold" fill="#8a5a20" font-family="Liberation Sans">$</text></svg>
<div class="t" style="left:1875.5px;top:885.2px;font-size:21px;color:#333;font-weight:normal;">收款记录</div>
<svg class="r" style="left:2002px;top:893.5px" width="22" height="22" viewBox="0 0 22 22"><path d="M2 1 H15 V18 H2 Z" fill="#eeeef5" stroke="#b8b8c8" stroke-width="1"/><path d="M5 5 H12 M5 8 H12 M5 11 H12 M5 14 H10" stroke="#9a9ab0" stroke-width="1"/><path d="M2 18 Q2 21 5 21 H20 Q17 20 17 18 Z" fill="#c8c8d8"/></svg>
<div class="t" style="left:2026px;top:885.2px;font-size:21px;color:#333;font-weight:normal;">销售发票</div>
<svg class="r" style="left:2153px;top:893.5px" width="22" height="22" viewBox="0 0 22 22"><path d="M1 6 L7 0 L11 3 L13 1 L15 3 L13 5 L10 8 Z" fill="#888"/><path d="M10 8 L12 6 L21 17 L19 19 Z" fill="#8a4a2a"/></svg>
<div class="t" style="left:2177.5px;top:885.2px;font-size:21px;color:#333;font-weight:normal;">服务工单</div>
<div class="r" style="left:320px;top:942px;width:114px;height:58px;border:1px solid #c9c9c9;border-radius:8px;background:#fff"></div>
<svg class="r" style="left:337px;top:957.0px" width="26" height="26" viewBox="0 0 26 26"><path d="M4 13 H21 M12.5 4.5 V21.5" stroke="#222" stroke-width="3.4"/></svg>
<div class="t" style="left:368.5px;top:951.8px;font-size:22px;color:#333;font-weight:normal;">新增</div>
<div class="r" style="left:442px;top:942px;width:114px;height:58px;border:1px solid #c9c9c9;border-radius:8px;background:#fff"></div>
<svg class="r" style="left:457px;top:957.0px" width="26" height="26" viewBox="0 0 26 26"><path d="M2 24 L3 18 L17 4 L22 9 L8 23 Z" fill="none" stroke="#222" stroke-width="2.6" stroke-linejoin="round"/><path d="M19 2 L21 0.5 L25.5 5 L24 7 Z" fill="#222" stroke="#222" stroke-width="2"/><path d="M2 24 L3 18 L8 23 Z" fill="#222"/></svg>
<div class="t" style="left:491px;top:951.8px;font-size:22px;color:#333;font-weight:normal;">修改</div>
<div class="r" style="left:564px;top:942px;width:114px;height:58px;border:1px solid #c9c9c9;border-radius:8px;background:#fff"></div>
<svg class="r" style="left:580px;top:957.0px" width="26" height="26" viewBox="0 0 26 26"><path d="M5.5 6 L20 20.5 M20 6 L5.5 20.5" stroke="#222" stroke-width="3.2"/></svg>
<div class="t" style="left:612.5px;top:951.8px;font-size:22px;color:#333;font-weight:normal;">删除</div>
<div class="r" style="left:686px;top:942px;width:157px;height:58px;border:1px solid #c9c9c9;border-radius:8px;background:#fff"></div>
<svg class="r" style="left:701.5px;top:957.0px" width="26" height="26" viewBox="0 0 26 26"><circle cx="13" cy="13" r="11.2" fill="none" stroke="#222" stroke-width="2.2"/><path d="M12 6.5 V14 H18" fill="none" stroke="#222" stroke-width="2.2"/></svg>
<div class="t" style="left:735.5px;top:951.8px;font-size:22px;color:#333;font-weight:normal;">修改历史</div>
<div class="r" style="left:850px;top:942px;width:115px;height:58px;border:1px solid #c9c9c9;border-radius:8px;background:#fff"></div>
<svg class="r" style="left:866px;top:957.0px" width="26" height="26" viewBox="0 0 26 26"><circle cx="13" cy="13" r="11.3" fill="none" stroke="#f5b400" stroke-width="2.2"/><text x="13" y="20" text-anchor="middle" font-size="18" font-weight="bold" fill="#f5b400" stroke="#f5b400" stroke-width="0.9" font-family="Liberation Sans">?</text></svg>
<div class="t" style="left:899.5px;top:951.8px;font-size:22px;color:#333;font-weight:normal;">帮助</div>
<div class="r" style="left:312px;top:1006.5px;width:2206px;height:1px;background:#e6e6e6"></div>
<div class="r" style="left:312px;top:1007.5px;width:2206px;height:63px;background:#f3f3f3"></div>
<div class="r" style="left:312px;top:1070px;width:2206px;height:1px;background:#e6e6e6"></div>
<div class="t" style="left:325.5px;top:1021px;font-size:21px;color:#666;font-weight:bold;">姓名</div>
<div class="t" style="left:448.5px;top:1021px;font-size:21px;color:#666;font-weight:bold;">部门/科室</div>
<div class="t" style="left:608px;top:1021px;font-size:21px;color:#666;font-weight:bold;">职务</div>
<div class="t" style="left:767px;top:1021px;font-size:21px;color:#666;font-weight:bold;">组织角色</div>
<div class="t" style="left:943.5px;top:1021px;font-size:21px;color:#666;font-weight:bold;">主联系人</div>
<div class="t" style="left:1058px;top:1021px;font-size:21px;color:#666;font-weight:bold;">手机</div>
<div class="t" style="left:1216.5px;top:1021px;font-size:21px;color:#666;font-weight:bold;">电话</div>
<div class="t" style="left:1393px;top:1021px;font-size:21px;color:#666;font-weight:bold;">常用邮箱</div>
<div class="t" style="left:1604px;top:1021px;font-size:21px;color:#666;font-weight:bold;">关系等级</div>
<div class="t" style="left:1745.5px;top:1021px;font-size:21px;color:#666;font-weight:bold;">生日</div>
<div class="t" style="left:1904px;top:1021px;font-size:21px;color:#666;font-weight:bold;">爱好</div>
<div class="t" style="left:2082px;top:1021px;font-size:21px;color:#666;font-weight:bold;">状态</div>
<div class="t" style="left:2222px;top:1021px;font-size:21px;color:#666;font-weight:bold;">最后跟进</div>
<div class="t" style="left:2382px;top:1021px;font-size:21px;color:#666;font-weight:bold;">下次跟进</div>
<div class="t" style="left:324.5px;top:1089px;font-size:21px;color:#3a8ad0;font-weight:normal;">王康</div>
<div class="t" style="left:942.5px;top:1089px;font-size:21px;color:#333;font-weight:normal;">是</div>
<div class="r" style="left:312px;top:1146.5px;width:2205px;height:1px;background:#e6e6e6"></div>
<div class="r" style="left:2517.5px;top:1000px;width:1px;height:372px;background:#e8e8e8"></div>
</body></html>
